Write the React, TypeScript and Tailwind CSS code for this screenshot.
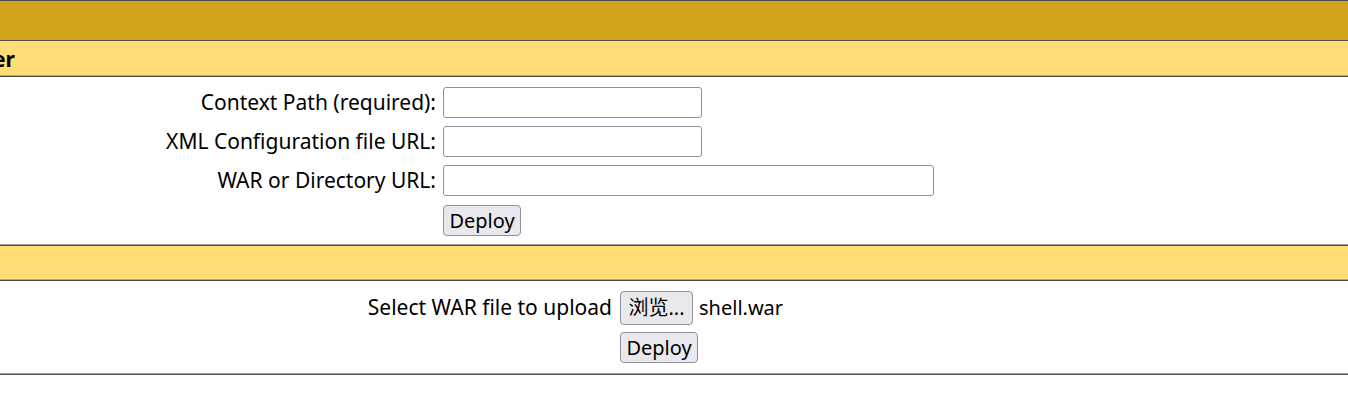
import React from "react";

function Sep() {
  return (
    <div>
      <div className="h-px bg-[#a3a3a3]" />
      <div className="h-px bg-[#4d4d4d]" />
    </div>
  );
}

function Input({ w }: { w: string }) {
  return (
    <input
      type="text"
      className={`${w} h-[31px] border border-[#8f8f9d] rounded-[3px] bg-white px-1 outline-none`}
    />
  );
}

function Btn({ children, w, h }: { children: React.ReactNode; w: string; h: string }) {
  return (
    <button
      type="button"
      className={`${w} ${h} border border-[#8f8f9d] rounded-[4px] bg-[#e9e9ed] text-black text-[20px] leading-none flex items-center justify-center`}
    >
      {children}
    </button>
  );
}

export default function App() {
  return (
    <div
      className="w-[1348px] h-[396px] bg-white overflow-hidden text-black text-[21px]"
      style={{ fontFamily: '"Noto Sans", "Noto Sans CJK SC", sans-serif' }}
    >
      <div className="h-px bg-[#4d4d4d]" />
      <div className="h-[38px] bg-[#D2A41C]" />
      <Sep />
      <div className="h-[34px] bg-[#FFDC75] overflow-hidden flex items-center pt-[3px]">
        <div className="w-[15px] flex justify-end whitespace-nowrap font-bold text-[21px]">
          <span>Deploy directory or WAR file located on server</span>
        </div>
      </div>
      <Sep />
      <div className="h-[167px] pt-[10px] grid grid-cols-[436px_1fr] gap-x-[7px] gap-y-[8px] content-start">
        <div className="h-[31px] flex items-center justify-end whitespace-nowrap">Context Path (required):</div>
        <div className="flex items-center"><Input w="w-[259px]" /></div>
        <div className="h-[31px] flex items-center justify-end whitespace-nowrap">XML Configuration file URL:</div>
        <div className="flex items-center"><Input w="w-[259px]" /></div>
        <div className="h-[31px] flex items-center justify-end whitespace-nowrap">WAR or Directory URL:</div>
        <div className="flex items-center"><Input w="w-[491px]" /></div>
        <div />
        <div className="flex items-center pt-px"><Btn w="w-[78px]" h="h-[31px]">Deploy</Btn></div>
      </div>
      <Sep />
      <div className="h-[33px] bg-[#FFDC75]" />
      <Sep />
      <div className="h-[92px] pt-[10px] grid grid-cols-[612px_1fr] gap-x-[8px] gap-y-[7px] content-start">
        <div className="h-[34px] flex items-center justify-end whitespace-nowrap">Select WAR file to upload</div>
        <div className="flex items-center gap-[6px]">
          <Btn w="w-[73px]" h="h-[34px]">浏览...</Btn>
          <span className="text-[20px]">shell.war</span>
        </div>
        <div />
        <div className="flex items-center"><Btn w="w-[78px]" h="h-[31px]">Deploy</Btn></div>
      </div>
      <Sep />
    </div>
  );
}
